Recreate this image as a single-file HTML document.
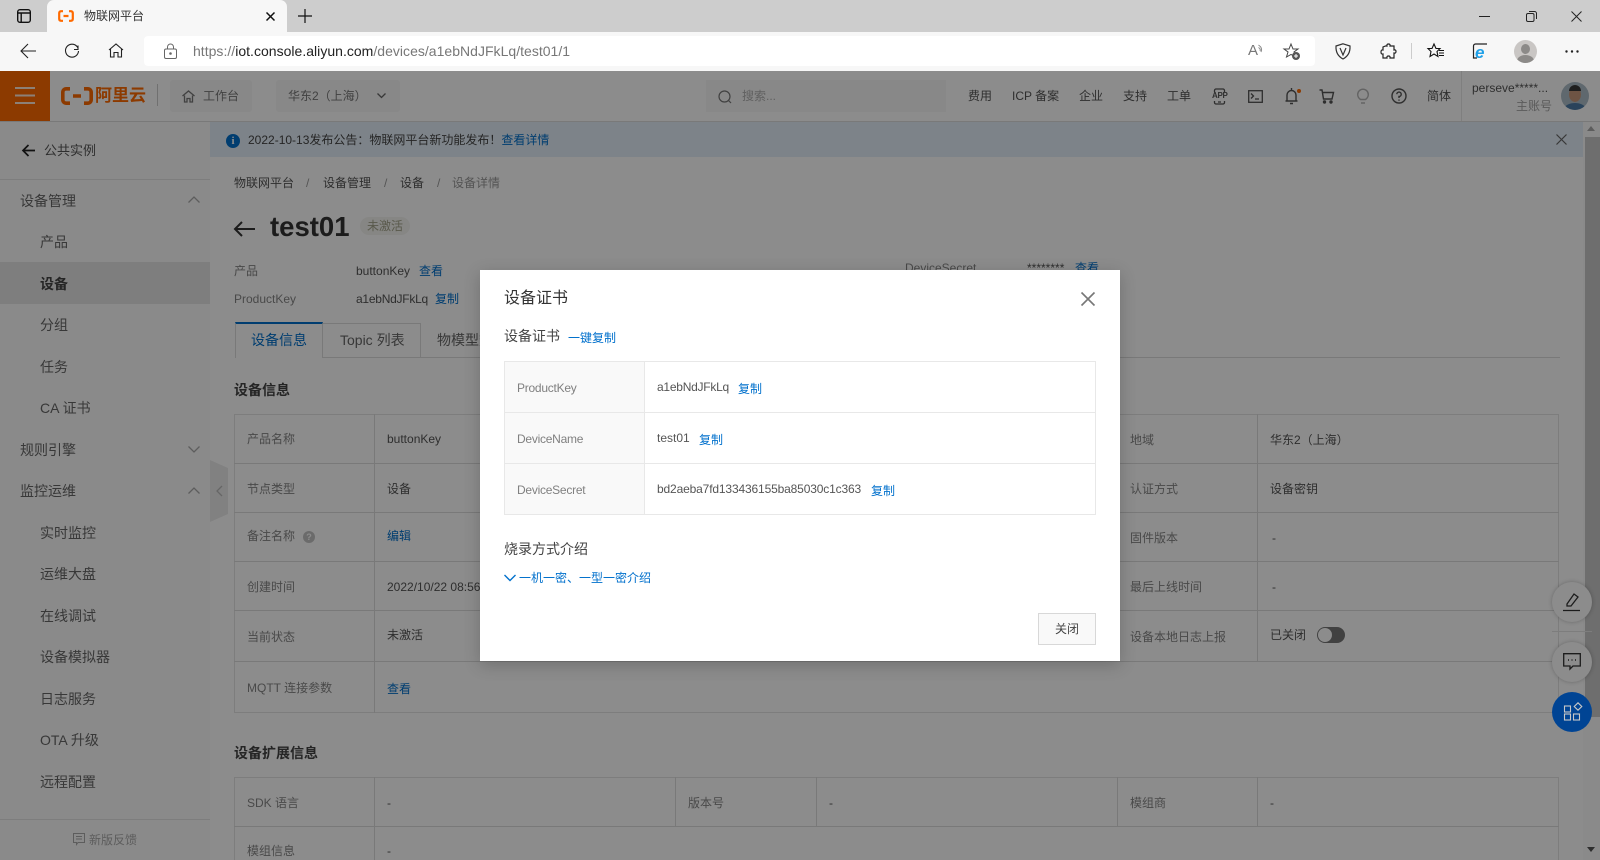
<!DOCTYPE html>
<html lang="zh"><head><meta charset="utf-8"><title>物联网平台</title>
<style>
html,body{margin:0;padding:0;width:1600px;height:860px;overflow:hidden;background:#fff}
body{position:relative;font-family:"Liberation Sans","Noto Sans CJK SC",sans-serif;font-size:12px;color:#4a4a4a}
.t{position:absolute;white-space:nowrap;transform:translateY(-50%);line-height:20px}
.b{position:absolute}
.s{font-size:14px}
.l{color:#868686}
.a{color:#0070cc}
.v{color:#555}
.k{letter-spacing:-.25px}
.side{color:#666;font-size:14px}
svg{position:absolute;overflow:visible;fill:none}
.ln{position:absolute;background:#dcdcdc}
#ov{position:absolute;left:0;top:71px;width:1600px;height:789px;background:rgba(0,0,0,.45)}
</style></head><body>

<!-- browser chrome -->
<div class="b" style="left:0;top:0;width:1600px;height:32px;background:#cdcdcd"></div>
<div class="b" style="left:47px;top:0;width:240px;height:33px;background:#f7f7f7;border-radius:7px 7px 0 0"></div>
<svg style="left:17px;top:9px" width="14" height="14" stroke="#111" stroke-width="1.4"><rect x=".7" y=".7" width="12.6" height="12.6" rx="2.2"/><path d="M.7 4H13.3M4.2 4V13"/></svg>
<svg style="left:58px;top:10px" width="16" height="12" stroke="#ff6a00" stroke-width="2.2"><path d="M5 1.2H3A2 2 0 0 0 1.2 3V9A2 2 0 0 0 3 10.8H5M11 1.2H13A2 2 0 0 1 14.8 3V9A2 2 0 0 1 13 10.8H11M5.5 6H10.5"/></svg>
<div class="t" style="left:84px;top:16px;color:#333">物联网平台</div>
<svg style="left:266px;top:12px" width="9" height="9" stroke="#111" stroke-width="1.5"><path d="M.5.5L8.5 8.5M8.5.5L.5 8.5"/></svg>
<svg style="left:298px;top:9px" width="14" height="14" stroke="#111" stroke-width="1.2"><path d="M7 0V14M0 7H14"/></svg>
<svg style="left:1479px;top:16px" width="12" height="2" stroke="#222"><path d="M0 .5H11"/></svg>
<svg style="left:1526px;top:11px" width="11" height="11" stroke="#222"><rect x=".5" y="2.5" width="7.5" height="8" rx="1.5"/><path d="M3 .5H8.5A2 2 0 0 1 10.5 2.5V8"/></svg>
<svg style="left:1571px;top:11px" width="11" height="11" stroke="#222"><path d="M.5.5L10.5 10.5M10.5.5L.5 10.5"/></svg>

<div class="b" style="left:0;top:32px;width:1600px;height:39px;background:#f7f7f7"></div>
<div class="b" style="left:144px;top:36px;width:1171px;height:30px;background:#fff;border-radius:4px"></div>
<svg style="left:20px;top:43px" width="17" height="16" stroke="#222" stroke-width="1.1"><path d="M16 8H1M8 1L1 8L8 15"/></svg>
<svg style="left:64px;top:42px" width="17" height="17" stroke="#222" stroke-width="1.1"><path d="M14 3.5V7.5H10M14.5 9A6.5 6.5 0 1 1 13 4.5L14 6"/></svg>
<svg style="left:108px;top:43px" width="16" height="15" stroke="#222" stroke-width="1.1"><path d="M1 7L8 1L15 7M2.5 6V14H6V9.5H10V14H13.5V6"/></svg>
<svg style="left:164px;top:44px" width="13" height="15" stroke="#666" stroke-width="1"><rect x=".5" y="5" width="12" height="9.5" rx="1.5"/><path d="M3.5 5V3A3 3 0 0 1 9.5 3V5"/><circle cx="6.5" cy="9.5" r=".8" fill="#666"/></svg>
<div class="t" style="left:193px;top:51px;font-size:14px;color:#222;letter-spacing:.02px"><span style="color:#777">https://</span>iot.console.aliyun.com<span style="color:#777">/devices/a1ebNdJFkLq/test01/1</span></div>
<div class="t" style="left:1248px;top:51px;font-size:15px;color:#777">A</div>
<svg style="left:1258px;top:44px" width="6" height="10" stroke="#888"><path d="M.5 1Q5 4 3 8M.5 3.5Q3 5 2 7"/></svg>
<svg style="left:1283px;top:43px" width="18" height="18" stroke="#444"><path d="M8 1L10 6H15L11 9L12.5 14L8 11.5L3.5 14L5 9L1 6H6Z"/><circle cx="13" cy="13" r="4" fill="#555" stroke="none"/><path d="M11 13H15M13 11V15" stroke="#fff"/></svg>
<svg style="left:1335px;top:43px" width="16" height="17" stroke="#333"><path d="M8 .8L15 3Q15.5 12 8 16Q.5 12 1 3ZM5 5L8 12L11 5" stroke-width="1.2"/></svg>
<svg style="left:1380px;top:43px" width="16" height="17" stroke="#222" stroke-width="1.2"><path d="M5.5 3H7Q6.5 1 8.5 1Q10.5 1 10 3H14V7Q16 6.5 16 8.5Q16 10.5 14 10V15H10Q10.5 13 8.5 13Q6.5 13 7 15H3V11Q1 11.5 1 9T3 7V4Z"/></svg>
<div class="b" style="left:1411px;top:43px;width:1px;height:16px;background:#ccc"></div>
<svg style="left:1427px;top:43px" width="18" height="16" stroke="#111" stroke-width="1.1"><path d="M7 1L9 5.5H13L10 8.5L11 13.5L7 11L3 13.5L4 8.5L1 5.5H5ZM12 7.5H17M12 10H17M12 12.5H17"/></svg>
<svg style="left:1472px;top:43px" width="16" height="17" stroke="#222" stroke-width="1.2"><path d="M5 15H1.5V3A2 2 0 0 1 3.5 1H15"/></svg>
<div class="t" style="left:1475px;top:53px;font-size:17px;font-weight:bold;font-style:italic;color:#1fa0e8">e</div>
<div class="b" style="left:1514px;top:40px;width:23px;height:23px;border-radius:50%;background:#c9c6c4;overflow:hidden"><div class="b" style="left:7px;top:4px;width:9px;height:10px;border-radius:50%;background:#8c8a88"></div><div class="b" style="left:3px;top:15px;width:17px;height:12px;border-radius:50%;background:#8c8a88"></div></div>
<svg style="left:1565px;top:50px" width="14" height="3"><circle cx="1.5" cy="1.5" r="1.2" fill="#222"/><circle cx="7" cy="1.5" r="1.2" fill="#222"/><circle cx="12.5" cy="1.5" r="1.2" fill="#222"/></svg>

<!-- console page -->
<div class="b" style="left:0;top:71px;width:50px;height:50px;background:#ff6a00"></div>
<svg style="left:15px;top:87px" width="20" height="17" stroke="#fff" stroke-width="2" opacity=".85"><path d="M0 1H20M0 8.5H20M0 16H20"/></svg>
<svg style="left:61px;top:87px" width="32" height="18" stroke="#ff6a00" stroke-width="3.6"><path d="M9 1.8H5A3.4 3.4 0 0 0 1.8 5V13A3.4 3.4 0 0 0 5 16.2H9M23 1.8H27A3.4 3.4 0 0 1 30.2 5V13A3.4 3.4 0 0 1 27 16.2H23M12 9H20" /></svg>
<div class="t" style="left:95px;top:96px;font-size:17px;font-weight:bold;color:#ff6a00">阿里云</div>
<div class="b" style="left:157px;top:84px;width:1px;height:22px;background:#ccc"></div>
<div class="b" style="left:170px;top:80px;width:82px;height:32px;background:#f7f7f7;border-radius:3px"></div>
<svg style="left:182px;top:90px" width="13" height="13" stroke="#777" stroke-width="1.3"><path d="M.5 6L6.5 1L12.5 6M2.5 5.5V12H5V8.5H8V12H10.5V5.5"/></svg>
<div class="t" style="left:203px;top:96px;color:#777;font-size:12px">工作台</div>
<div class="b" style="left:276px;top:80px;width:124px;height:32px;background:#f7f7f7;border-radius:3px"></div>
<div class="t" style="left:288px;top:96px;color:#777">华东2（上海）</div>
<svg style="left:377px;top:93px" width="9" height="6" stroke="#666" stroke-width="1.3"><path d="M.5.5L4.5 4.5L8.5.5"/></svg>
<div class="b" style="left:706px;top:80px;width:240px;height:32px;background:#f7f7f7"></div>
<svg style="left:718px;top:90px" width="14" height="14" stroke="#777" stroke-width="1.2"><circle cx="6.5" cy="6.5" r="5.5"/><path d="M10.5 10.5L13 13"/></svg>
<div class="t" style="left:742px;top:96px;color:#b0b0b0">搜索...</div>
<div class="t" style="left:968px;top:96px;color:#555">费用</div>
<div class="t" style="left:1012px;top:96px;color:#555">ICP 备案</div>
<div class="t" style="left:1079px;top:96px;color:#555">企业</div>
<div class="t" style="left:1123px;top:96px;color:#555">支持</div>
<div class="t" style="left:1167px;top:96px;color:#555">工单</div>
<svg style="left:1212px;top:88px" width="15" height="17" stroke="#555" stroke-width="1.3"><path d="M2.5 4V2.5A1.5 1.5 0 0 1 4 1H11A1.5 1.5 0 0 1 12.5 2.5V4M2.5 13V14.5A1.5 1.5 0 0 0 4 16H11A1.5 1.5 0 0 0 12.5 14.5V13M6 14H9"/></svg>
<div class="t" style="left:1212px;top:96px;font-size:8px;font-weight:bold;letter-spacing:-.3px;color:#555">APP</div>
<svg style="left:1248px;top:90px" width="15" height="13" stroke="#555" stroke-width="1.3"><rect x=".7" y=".7" width="13.6" height="11.6"/><path d="M3 3.5L5.5 6L3 8.5M7 9H11"/></svg>
<svg style="left:1285px;top:87px" width="13" height="18" stroke="#555" stroke-width="1.4"><path d="M6.5 1V3M2 13.5V8A4.5 4.5 0 0 1 11 8V13.5M.5 14H12.5M5 16.5H8"/></svg>
<div class="b" style="left:1297px;top:89px;width:4px;height:4px;border-radius:50%;background:#ff6a00"></div>
<svg style="left:1319px;top:89px" width="16" height="15" stroke="#555" stroke-width="1.4"><path d="M.5 1H3L4.5 10H13L14.5 3.5H3.5"/><circle cx="5.5" cy="13" r="1" fill="#555"/><circle cx="12" cy="13" r="1" fill="#555"/></svg>
<svg style="left:1357px;top:88px" width="12" height="17" stroke="#b5b5b5" stroke-width="1.4"><path d="M3.5 11.5Q.7 9.5.7 6.5A5.3 5.3 0 0 1 11.3 6.5Q11.3 9.5 8.5 11.5ZM4 15H8"/></svg>
<svg style="left:1391px;top:88px" width="16" height="16" stroke="#555" stroke-width="1.4"><circle cx="8" cy="8" r="7"/><path d="M5.8 6.2A2.2 2.2 0 1 1 8 8.5V10M8 11.5V12.8"/></svg>
<div class="t" style="left:1427px;top:96px;color:#555">简体</div>
<div class="b" style="left:1461px;top:71px;width:1px;height:50px;background:#e8e8e8"></div>
<div class="t" style="left:1472px;top:88px;font-size:12px;color:#555">perseve*****...</div>
<div class="t" style="left:1516px;top:106px;color:#a5a5a5">主账号</div>
<div class="b" style="left:1561px;top:82px;width:28px;height:28px;border-radius:50%;background:#aebdc8;overflow:hidden">
 <div class="b" style="left:8px;top:5px;width:12px;height:15px;border-radius:50%;background:#c99a7c"></div>
 <div class="b" style="left:8px;top:3px;width:12px;height:6px;border-radius:6px 6px 0 0;background:#3a3a3a"></div>
 <div class="b" style="left:4px;top:21px;width:20px;height:10px;border-radius:50%;background:#4d7ba6"></div>
</div>
<div class="b" style="left:0;top:121px;width:1600px;height:1px;background:#ddd"></div>

<!-- sidebar -->
<div class="b" style="left:0;top:122px;width:210px;height:738px;background:#fbfbfb"></div>
<div class="b" style="left:0;top:262px;width:210px;height:42px;background:#e6e6e6"></div>
<div class="b" style="left:0;top:179px;width:210px;height:1px;background:#e3e3e3"></div>
<div class="b" style="left:0;top:819px;width:210px;height:1px;background:#e3e3e3"></div>
<svg style="left:22px;top:144px" width="13" height="13" stroke="#222" stroke-width="1.7"><path d="M13 6.5H1M6.5 1L1 6.5L6.5 12"/></svg>
<div class="t s" style="left:44px;top:150px;font-size:13px;color:#555;transform:translateY(-45%)">公共实例</div>
<div class="t side" style="left:20px;top:201px">设备管理</div>
<div class="t side" style="left:40px;top:242px">产品</div>
<div class="t side" style="left:40px;top:284px;font-weight:bold;color:#444">设备</div>
<div class="t side" style="left:40px;top:325px">分组</div>
<div class="t side" style="left:40px;top:367px">任务</div>
<div class="t side" style="left:40px;top:408px">CA 证书</div>
<div class="t side" style="left:20px;top:450px">规则引擎</div>
<div class="t side" style="left:20px;top:491px">监控运维</div>
<div class="t side" style="left:40px;top:533px">实时监控</div>
<div class="t side" style="left:40px;top:574px">运维大盘</div>
<div class="t side" style="left:40px;top:616px">在线调试</div>
<div class="t side" style="left:40px;top:657px">设备模拟器</div>
<div class="t side" style="left:40px;top:699px">日志服务</div>
<div class="t side" style="left:40px;top:740px">OTA 升级</div>
<div class="t side" style="left:40px;top:782px">远程配置</div>
<svg style="left:188px;top:196px" width="12" height="7" stroke="#aaa" stroke-width="1.3"><path d="M.5 6.5L6 1L11.5 6.5"/></svg>
<svg style="left:188px;top:446px" width="12" height="7" stroke="#aaa" stroke-width="1.3"><path d="M.5.5L6 6L11.5.5"/></svg>
<svg style="left:188px;top:487px" width="12" height="7" stroke="#aaa" stroke-width="1.3"><path d="M.5 6.5L6 1L11.5 6.5"/></svg>
<svg style="left:73px;top:833px" width="12" height="12" stroke="#aaa"><path d="M.5.5H11.5V9.5H5L3.5 11.5V9.5H.5ZM3 3.5H9M3 6H9"/></svg>
<div class="t" style="left:89px;top:840px;color:#aaa">新版反馈</div>

<!-- notice -->
<div class="b" style="left:210px;top:122px;width:1373px;height:35px;background:#e4eff9"></div>
<div class="b" style="left:226px;top:134px;width:14px;height:14px;border-radius:50%;background:#0070cc;color:#fff;font:bold 11px/14px 'Liberation Serif',serif;text-align:center">i</div>
<div class="t" style="left:248px;top:140px;color:#444">2022-10-13发布公告：物联网平台新功能发布！<span class="a">查看详情</span></div>
<svg style="left:1556px;top:134px" width="11" height="11" stroke="#666" stroke-width="1.2"><path d="M.5.5L10.5 10.5M10.5.5L.5 10.5"/></svg>

<!-- main -->
<div class="b" style="left:210px;top:157px;width:1373px;height:703px;background:#fff"></div>
<div class="t" style="left:234px;top:183px;color:#555">物联网平台</div>
<div class="t" style="left:306px;top:183px;color:#999">/</div>
<div class="t" style="left:323px;top:183px;color:#555">设备管理</div>
<div class="t" style="left:384px;top:183px;color:#999">/</div>
<div class="t" style="left:400px;top:183px;color:#555">设备</div>
<div class="t" style="left:437px;top:183px;color:#999">/</div>
<div class="t" style="left:452px;top:183px;color:#999">设备详情</div>
<svg style="left:234px;top:221px" width="21" height="16" stroke="#333" stroke-width="2"><path d="M21 8H1M8 1L1 8L8 15"/></svg>
<div class="t" style="left:270px;top:227px;font-size:27.5px;font-weight:bold;color:#333">test01</div>
<div class="b" style="left:360px;top:217px;width:50px;height:18px;border-radius:9px;background:#f5f5f0"></div>
<div class="t" style="left:367px;top:226px;color:#a3a38a">未激活</div>
<div class="t l" style="left:234px;top:271px">产品</div>
<div class="t v" style="left:356px;top:271px">buttonKey</div>
<div class="t a" style="left:419px;top:271px">查看</div>
<div class="t l" style="left:234px;top:299px">ProductKey</div>
<div class="t v k" style="left:356px;top:299px">a1ebNdJFkLq</div>
<div class="t a" style="left:435px;top:299px">复制</div>
<div class="t l" style="left:905px;top:268px">DeviceSecret</div>
<div class="t v" style="left:1027px;top:268px">********</div>
<div class="t a" style="left:1075px;top:268px">查看</div>

<div class="b" style="left:235px;top:357px;width:1325px;height:1px;background:#dcdcdc"></div>
<div class="b" style="left:235px;top:322px;width:88px;height:36px;box-sizing:border-box;border-top:2px solid #0070cc;border-left:1px solid #dcdcdc;border-right:1px solid #dcdcdc;background:#fff"></div>
<div class="b" style="left:323px;top:323px;width:98px;height:34px;box-sizing:border-box;border-top:1px solid #dcdcdc;border-right:1px solid #dcdcdc"></div>
<div class="t s" style="left:251px;top:340px;color:#0070cc">设备信息</div>
<div class="t s" style="left:340px;top:340px;color:#666">Topic 列表</div>
<div class="t s" style="left:437px;top:340px;color:#666">物模型数据</div>
<div class="t s" style="left:234px;top:390px;font-weight:bold;color:#444">设备信息</div>

<!-- table 1 -->
<div class="b" style="left:234px;top:414px;width:1325px;height:299px;box-sizing:border-box;border:1px solid #e3e3e3"></div>
<div class="ln" style="left:234px;top:463px;width:1325px;height:1px"></div>
<div class="ln" style="left:234px;top:512px;width:1325px;height:1px"></div>
<div class="ln" style="left:234px;top:561px;width:1325px;height:1px"></div>
<div class="ln" style="left:234px;top:610px;width:1325px;height:1px"></div>
<div class="ln" style="left:234px;top:661px;width:1325px;height:1px"></div>
<div class="ln" style="left:374px;top:414px;width:1px;height:299px"></div>
<div class="ln" style="left:1257px;top:414px;width:1px;height:247px"></div>
<div class="t l" style="left:247px;top:439px">产品名称</div><div class="t v" style="left:387px;top:439px">buttonKey</div>
<div class="t l" style="left:247px;top:489px">节点类型</div><div class="t v" style="left:387px;top:489px">设备</div>
<div class="t l" style="left:247px;top:536px">备注名称</div>
<div class="b" style="left:303px;top:531px;width:12px;height:12px;border-radius:50%;background:#c4c4c4;color:#fff;font-size:9px;line-height:12px;text-align:center;font-weight:bold">?</div>
<div class="t a" style="left:387px;top:536px">编辑</div>
<div class="t l" style="left:247px;top:587px">创建时间</div><div class="t v" style="left:387px;top:587px">2022/10/22 08:56:12</div>
<div class="t l" style="left:247px;top:637px">当前状态</div><div class="t v" style="left:387px;top:635px">未激活</div>
<div class="t l" style="left:247px;top:688px">MQTT 连接参数</div><div class="t a" style="left:387px;top:689px">查看</div>
<div class="t l" style="left:1130px;top:440px">地域</div><div class="t v" style="left:1270px;top:440px">华东2（上海）</div>
<div class="t l" style="left:1130px;top:489px">认证方式</div><div class="t v" style="left:1270px;top:489px">设备密钥</div>
<div class="t l" style="left:1130px;top:538px">固件版本</div><div class="t v" style="left:1272px;top:538px">-</div>
<div class="t l" style="left:1130px;top:587px">最后上线时间</div><div class="t v" style="left:1272px;top:587px">-</div>
<div class="t l" style="left:1130px;top:637px">设备本地日志上报</div><div class="t v" style="left:1270px;top:635px">已关闭</div>
<div class="b" style="left:1317px;top:627px;width:28px;height:16px;border-radius:8px;background:#777"></div>
<div class="b" style="left:1318px;top:628px;width:14px;height:14px;border-radius:50%;background:#fff"></div>

<div class="t s" style="left:234px;top:753px;font-weight:bold;color:#444">设备扩展信息</div>
<!-- table 2 -->
<div class="b" style="left:234px;top:777px;width:1325px;height:100px;box-sizing:border-box;border:1px solid #e3e3e3"></div>
<div class="ln" style="left:234px;top:826px;width:1325px;height:1px"></div>
<div class="ln" style="left:374px;top:777px;width:1px;height:83px"></div>
<div class="ln" style="left:675px;top:777px;width:1px;height:49px"></div>
<div class="ln" style="left:816px;top:777px;width:1px;height:49px"></div>
<div class="ln" style="left:1117px;top:777px;width:1px;height:49px"></div>
<div class="ln" style="left:1257px;top:777px;width:1px;height:49px"></div>
<div class="t l" style="left:247px;top:803px">SDK 语言</div><div class="t v" style="left:387px;top:803px">-</div>
<div class="t l" style="left:688px;top:803px">版本号</div><div class="t v" style="left:829px;top:803px">-</div>
<div class="t l" style="left:1130px;top:803px">模组商</div><div class="t v" style="left:1270px;top:803px">-</div>
<div class="t l" style="left:247px;top:851px">模组信息</div><div class="t v" style="left:387px;top:851px">-</div>

<!-- collapse handle -->
<svg style="left:210px;top:460px" width="18" height="62"><path d="M0 0L18 8V54L0 62Z" fill="#ececec"/><path d="M12 26L7 31L12 36" stroke="#bbb" stroke-width="1.3"/></svg>

<!-- scrollbar -->
<div class="b" style="left:1583px;top:122px;width:17px;height:738px;background:#fbfbfb"></div>
<div class="b" style="left:1585px;top:137px;width:15px;height:580px;background:#c8c8c8"></div>
<svg style="left:1587px;top:847px" width="8" height="5"><path d="M0 0H8L4 5Z" fill="#555"/></svg>
<svg style="left:1587px;top:126px" width="8" height="5"><path d="M0 5H8L4 0Z" fill="#aaa"/></svg>

<!-- floating buttons -->
<div class="b" style="left:1552px;top:582px;width:40px;height:40px;border-radius:50%;background:#fff;box-shadow:0 0 4px rgba(0,0,0,.25)"></div>
<svg style="left:1563px;top:592px" width="18" height="20" stroke="#333" stroke-width="1.3"><path d="M4 12L11 2L15 5L8 14H4ZM0 18.5H17"/></svg>
<div class="b" style="left:1552px;top:631px;width:40px;height:1px;background:#e3e3e3"></div>
<div class="b" style="left:1552px;top:642px;width:40px;height:40px;border-radius:50%;background:#fff;box-shadow:0 0 4px rgba(0,0,0,.25)"></div>
<svg style="left:1563px;top:653px" width="18" height="17" stroke="#333" stroke-width="1.3"><path d="M.7.7H17.3V13H10L7 16V13H.7Z"/><path d="M5 7H6M8.5 7H9.5M12 7H13" stroke-width="1.5"/></svg>

<div id="ov"></div>

<!-- primary floating button, colour set directly above the scrim -->
<div class="b" style="left:1552px;top:692px;width:40px;height:40px;border-radius:50%;background:#004494"></div>
<svg style="left:1564px;top:702px" width="19" height="19" stroke="#c8c8c8" stroke-width="1.1"><rect x=".5" y="4" width="6" height="6"/><rect x=".5" y="12" width="6" height="6"/><rect x="9.5" y="12" width="6" height="6"/><path d="M14 .8L17.8 4.5L14 8.2L10.2 4.5Z"/></svg>

<!-- modal -->
<div class="b" style="left:480px;top:270px;width:640px;height:391px;background:#fff;box-shadow:0 4px 16px rgba(0,0,0,.2)"></div>
<div class="t" style="left:504px;top:299px;font-size:16px;color:#333">设备证书</div>
<svg style="left:1081px;top:292px" width="14" height="14" stroke="#777" stroke-width="1.6"><path d="M.5.5L13.5 13.5M13.5.5L.5 13.5"/></svg>
<div class="t s" style="left:504px;top:336px;color:#444">设备证书</div>
<div class="t a" style="left:568px;top:338px">一键复制</div>
<div class="b" style="left:504px;top:361px;width:592px;height:154px;box-sizing:border-box;border:1px solid #e8e8e8"></div>
<div class="b" style="left:505px;top:362px;width:139px;height:152px;background:#f9f9f9;border-right:1px solid #e8e8e8"></div>
<div class="b" style="left:505px;top:412px;width:590px;height:1px;background:#e8e8e8"></div>
<div class="b" style="left:505px;top:463px;width:590px;height:1px;background:#e8e8e8"></div>
<div class="t k" style="left:517px;top:388px;color:#808080">ProductKey</div>
<div class="t k" style="left:517px;top:439px;color:#808080">DeviceName</div>
<div class="t k" style="left:517px;top:490px;color:#808080">DeviceSecret</div>
<div class="t v k" style="left:657px;top:387px">a1ebNdJFkLq</div>
<div class="t a" style="left:738px;top:389px">复制</div>
<div class="t v" style="left:657px;top:438px">test01</div>
<div class="t a" style="left:699px;top:440px">复制</div>
<div class="t v" style="left:657px;top:489px;letter-spacing:-.15px">bd2aeba7fd133436155ba85030c1c363</div>
<div class="t a" style="left:871px;top:491px">复制</div>
<div class="t s" style="left:504px;top:549px;color:#444">烧录方式介绍</div>
<svg style="left:504px;top:574px" width="12" height="8" stroke="#0070cc" stroke-width="1.4"><path d="M.5 1L6 6.5L11.5 1"/></svg>
<div class="t a" style="left:519px;top:578px">一机一密、一型一密介绍</div>
<div class="b" style="left:1038px;top:613px;width:58px;height:32px;box-sizing:border-box;border:1px solid #d8d8d8;background:#f9f9f9;text-align:center;line-height:30px;color:#444">关闭</div>

</body></html>
